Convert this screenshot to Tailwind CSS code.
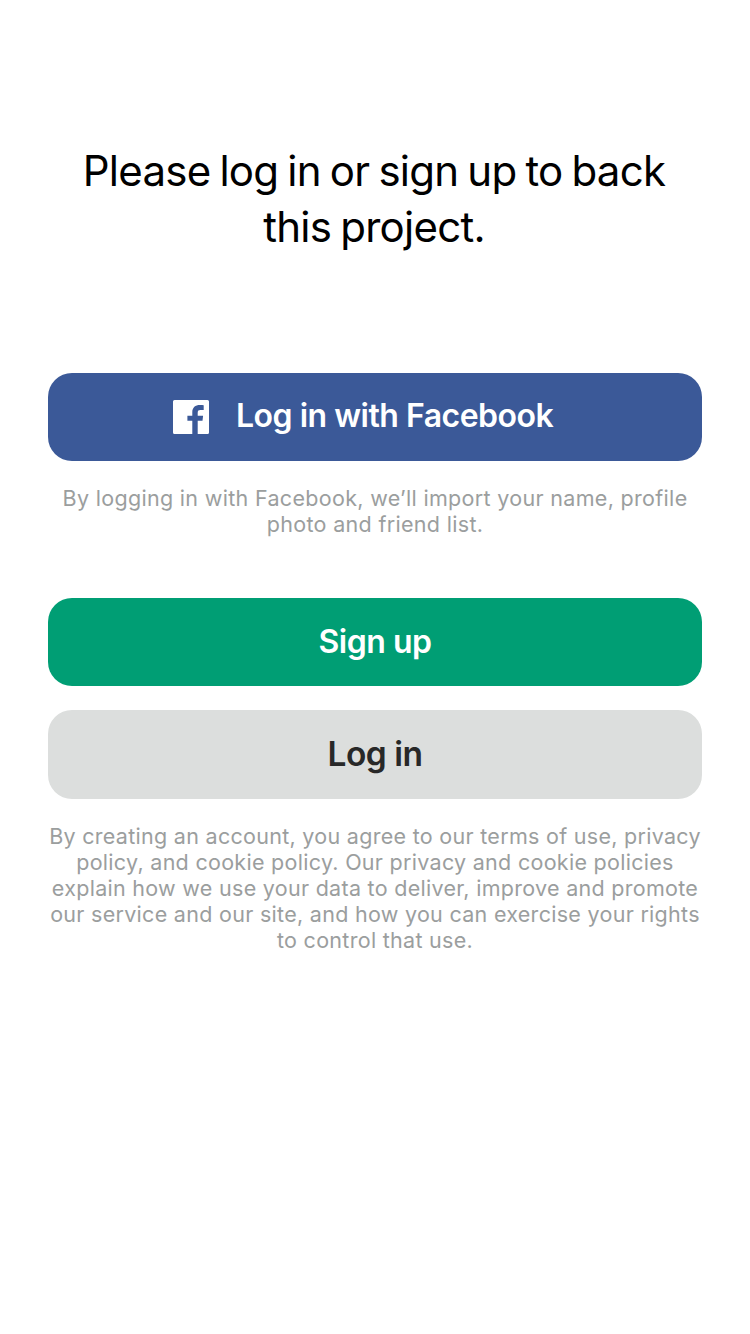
<!DOCTYPE html>
<html lang="en">
<head>
<meta charset="utf-8">
<title>Log in</title>
<script src="https://cdn.jsdelivr.net/npm/@tailwindcss/browser@4"></script>
</head>
<body class="bg-white font-['Inter',sans-serif]">
<main class="flex h-[1334px] w-[750px] flex-col px-12 pt-[143px] text-center">
  <h1 class="pr-0.5 text-[42px] leading-[56px] tracking-[-0.745px] whitespace-nowrap text-black [word-spacing:-2.05px]">Please log in or sign up to back<br>this project.</h1>
  <button class="mt-[118px] flex h-[88px] shrink-0 items-center rounded-[24px] bg-[#3b5998] pl-[125px] text-[32px] font-semibold tracking-[-0.5px] whitespace-nowrap text-white">
    <svg class="mr-[27px] h-[34px] w-[36px]" viewBox="0 0 36 34"><path fill="#fff" d="M1.5 0H34.5Q36 0 36 1.5V32.5Q36 34 34.5 34H24.7V20.7H29.5L30.1 15.7H24.7V12.7C24.7 10.7 25.5 10 27.4 10H30.7V5.3C29.7 5.1 28.5 5 27 5C22.2 5 19.3 7.6 19.3 12.2V15.7H14.4V20.7H19.3V34H1.5Q0 34 0 32.5V1.5Q0 0 1.5 0Z"/></svg>
    <span class="-mt-0.5">Log in with Facebook</span>
  </button>
  <p class="mt-6 text-[21.5px] leading-[26px] tracking-[0.32px] whitespace-nowrap text-[#9b9e9e]">By logging in with Facebook, we’ll import your name, profile<br>photo and friend list.</p>
  <button class="mt-[61px] h-[88px] shrink-0 rounded-[24px] bg-[#009e74] text-[32px] font-semibold tracking-[-0.5px] text-white">Sign up</button>
  <button class="mt-6 h-[89px] shrink-0 rounded-[24px] bg-[#dcdedd] text-[33.5px] font-semibold tracking-[-0.5px] text-[#282828]">Log in</button>
  <p class="mt-6 text-[21.5px] leading-[26px] tracking-[0.29px] whitespace-nowrap text-[#9b9e9e]">By creating an account, you agree to our terms of use, privacy<br>policy, and cookie policy. Our privacy and cookie policies<br>explain how we use your data to deliver, improve and promote<br>our service and our site, and how you can exercise your rights<br>to control that use.</p>
</main>
</body>
</html>
